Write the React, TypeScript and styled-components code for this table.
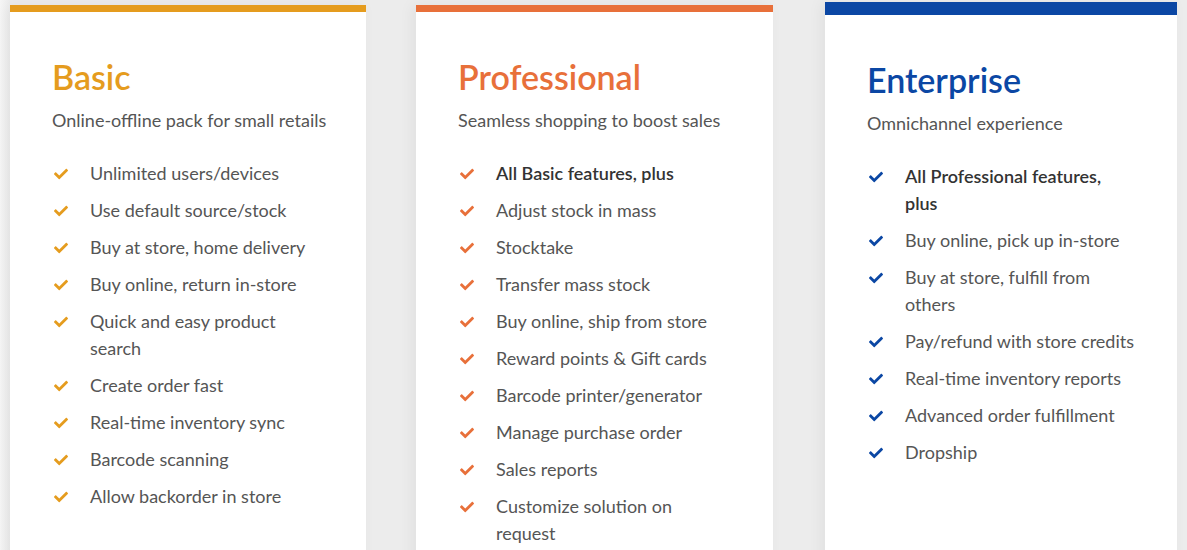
import React from "react";
import styled, { createGlobalStyle } from "styled-components";
import { FaCheck } from "react-icons/fa";

const Global = createGlobalStyle`
  html, body { margin: 0; padding: 0; }
  body {
    background: #ececec;
    font-family: Lato, "Open Sans", sans-serif;
    overflow: hidden;
    height: 550px;
  }
`;

const Page = styled.div`
  display: flex;
  align-items: flex-start;
  padding: 2px 10px 0 10px;
  height: 548px;
  background: linear-gradient(to right, #f6f6f6 0, #ececec 10px);
`;

const Card = styled.div<{ $width: number; $gap: number; $top: number }>`
  flex: none;
  width: ${(p) => p.$width}px;
  margin-right: ${(p) => p.$gap}px;
  margin-top: ${(p) => p.$top}px;
  min-height: 620px;
  background: #fff;
  box-shadow: -4px 0 14px rgba(0, 0, 0, 0.05);
  display: flex;
  flex-direction: column;
`;

const Bar = styled.div<{ $color: string; $h: number }>`
  height: ${(p) => p.$h}px;
  background: ${(p) => p.$color};
`;

const Body = styled.div`
  padding: 45px 28px 0 42px;
  display: flex;
  flex-direction: column;
`;

const Title = styled.h2<{ $color: string }>`
  margin: 0;
  font-size: 34px;
  line-height: 40px;
  font-weight: 600;
  color: ${(p) => p.$color};
`;

const Subtitle = styled.p`
  margin: 10px 0 0 0;
  font-size: 18px;
  line-height: 27px;
  color: #555;
`;

const List = styled.ul`
  list-style: none;
  margin: 26px 0 0 0;
  padding: 0;
  display: flex;
  flex-direction: column;
  gap: 10px;
`;

const Item = styled.li<{ $strong?: boolean }>`
  display: flex;
  align-items: flex-start;
  font-size: 18px;
  line-height: 27px;
  color: ${(p) => (p.$strong ? "#333" : "#555")};
  font-weight: ${(p) => (p.$strong ? 600 : 400)};
`;

const Tick = styled.span<{ $color: string }>`
  flex: none;
  width: 38px;
  height: 27px;
  display: flex;
  align-items: center;
  padding-left: 2px;
  box-sizing: border-box;
  color: ${(p) => p.$color};
  font-size: 14px;
`;

const Text = styled.span`
  max-width: 230px;
`;

type Plan = {
  name: string;
  sub: string;
  color: string;
  bar: number;
  width: number;
  gap: number;
  top: number;
  items: { t: string; strong?: boolean }[];
};

const plans: Plan[] = [
  {
    name: "Basic",
    sub: "Online-offline pack for small retails",
    color: "#e59c1e",
    bar: 7,
    width: 356,
    gap: 50,
    top: 3,
    items: [
      { t: "Unlimited users/devices" },
      { t: "Use default source/stock" },
      { t: "Buy at store, home delivery" },
      { t: "Buy online, return in-store" },
      { t: "Quick and easy product search" },
      { t: "Create order fast" },
      { t: "Real-time inventory sync" },
      { t: "Barcode scanning" },
      { t: "Allow backorder in store" },
    ],
  },
  {
    name: "Professional",
    sub: "Seamless shopping to boost sales",
    color: "#e8703a",
    bar: 7,
    width: 357,
    gap: 52,
    top: 3,
    items: [
      { t: "All Basic features, plus", strong: true },
      { t: "Adjust stock in mass" },
      { t: "Stocktake" },
      { t: "Transfer mass stock" },
      { t: "Buy online, ship from store" },
      { t: "Reward points & Gift cards" },
      { t: "Barcode printer/generator" },
      { t: "Manage purchase order" },
      { t: "Sales reports" },
      { t: "Customize solution on request" },
    ],
  },
  {
    name: "Enterprise",
    sub: "Omnichannel experience",
    color: "#0b47a4",
    bar: 13,
    width: 352,
    gap: 0,
    top: 0,
    items: [
      { t: "All Professional features, plus", strong: true },
      { t: "Buy online, pick up in-store" },
      { t: "Buy at store, fulfill from others" },
      { t: "Pay/refund with store credits" },
      { t: "Real-time inventory reports" },
      { t: "Advanced order fulfillment" },
      { t: "Dropship" },
    ],
  },
];

export default function App() {
  return (
    <>
      <Global />
      <Page>
        {plans.map((p) => (
          <Card key={p.name} $width={p.width} $gap={p.gap} $top={p.top}>
            <Bar $color={p.color} $h={p.bar} />
            <Body>
              <Title $color={p.color}>{p.name}</Title>
              <Subtitle>{p.sub}</Subtitle>
              <List>
                {p.items.map((it) => (
                  <Item key={it.t} $strong={it.strong}>
                    <Tick $color={p.color}>
                      <FaCheck />
                    </Tick>
                    <Text>{it.t}</Text>
                  </Item>
                ))}
              </List>
            </Body>
          </Card>
        ))}
      </Page>
    </>
  );
}
